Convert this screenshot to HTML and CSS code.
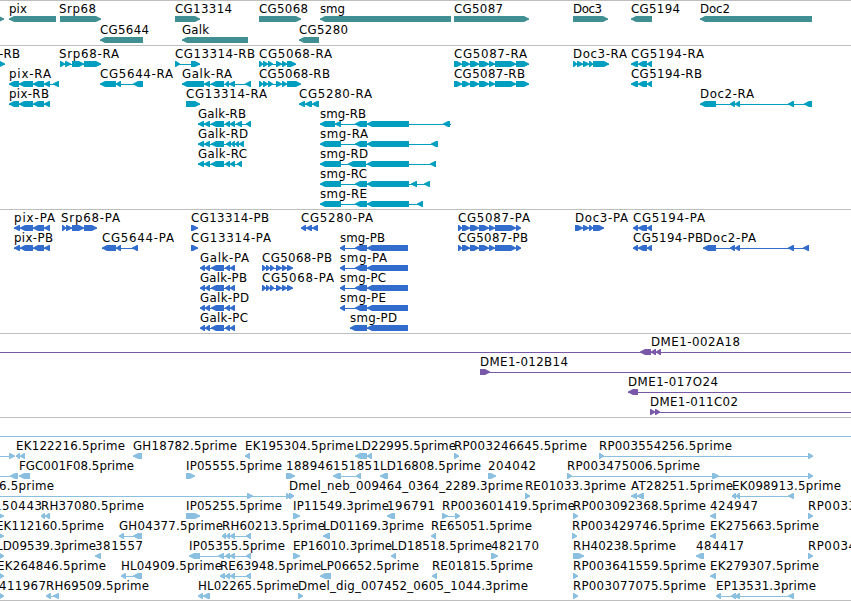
FILE: index.html
```html
<!DOCTYPE html>
<html lang="en">
<head>
<meta charset="utf-8">
<title>Genome browser</title>
<link rel="stylesheet" href="styles.css">
</head>
<body>
<main class="browser">
  <section class="track genes"><svg id="genes"></svg></section>
  <section class="track transcripts"><svg id="transcripts"></svg></section>
  <section class="track proteins"><svg id="proteins"></svg></section>
  <section class="track bacs"><svg id="bacs"></svg></section>
  <section class="track ests"><svg id="ests"></svg></section>
</main>
<script src="tracks.js"></script>
</body>
</html>
```
FILE: styles.css
```css
html, body { margin: 0; background: #fff; }
body { overflow: hidden; }
.browser {
  display: flex;
  flex-direction: column;
  width: 851px;
  height: 600px;
  border-bottom: 1px solid #bebebe;
}
.track { box-sizing: border-box; border-top: 1px solid #bebebe; }
.track svg { display: block; width: 851px; height: 100%; overflow: hidden; }
.genes { height: 45px; color: #408f93; }
.transcripts { height: 164px; color: #009fbf; }
.proteins { height: 124px; color: #326ccd; }
.bacs { height: 84px; color: #7a58a8; }
.ests { height: 183px; color: #8abfdf; }
.glyph { fill: currentColor; }
.intron { shape-rendering: crispEdges; }
.name {
  font-family: "DejaVu Sans", sans-serif;
  font-size: 11.8px;
  fill: #000;
}
```
FILE: tracks.js
```js
// Feature: row | label | label start | label end | strand | exons | optional intron span
const smg = "355-367,367-409";
const cg5087 = "462-470,470-479,479-489,489-495,495-516";
const tracks = {
  genes: { base: 12, step: 21, rows: `
0||0|0|>|-8-4
0|pix|9|27|<|9-56
0|Srp68|59|96|>|60-101
1|CG5644|100|149|<|100-143
0|CG13314|175|232|>|175-200
1|Galk|182|209|<|182-248
0|CG5068|259|308|>|259-301
1|CG5280|299|348|<|299-319
0|smg|320|345|<|320-451
0|CG5087|454|503|>|454-529
0|Doc3|573|602|>|573-608
0|CG5194|631|680|<|631-652
0|Doc2|700|730|<|700-812` },
  transcripts: { base: 12, step: 20, rows: `
0|-RB|-1|20|>|-4-5
0|Srp68-RA|59|119|>|60-65,65-71,72-84,84-101
0|CG13314-RB|175|255|>|175-180,191-200
0|CG5068-RA|259|332|>|259-263,263-268,268-273,276-282,282-287,287-296
0|CG5087-RA|454|527|>|454-462,${cg5087},516-529
0|Doc3-RA|573|627|>|573-577,577-583,583-589,589-593,593-609
0|CG5194-RA|631|704|<|631-638,638-647,647-652
1|pix-RA|9|51|<|9-19,19-33,33-44,44-50,53-59
1|CG5644-RA|100|173|<|100-116,116-121,133-143
1|Galk-RA|182|232|<|182-204,204-210,211-224,225-229,229-235,245-251
1|CG5068-RB|259|330|>|259-263,263-268,268-273,276-282,282-287,287-301
1|CG5087-RB|454|525|>|454-462,${cg5087},516-529
1|CG5194-RB|631|702|<|631-638,638-647,647-652
2|pix-RB|9|49|<|9-19,19-33,33-44,44-50
2|CG13314-RA|186|267|>|186-200
2|CG5280-RA|299|372|<|299-305,305-312,312-319
2|Doc2-RA|700|754|<|700-716,730-735,735-740,788-794,804-812
3|Galk-RB|198|246|<|198-204,204-210,211-224,225-230,230-235,236-242,246-251
3|smg-RB|320|366|<|320-335,335-341,${smg},443-450|320-451
4|Galk-RD|198|248|<|198-204,204-210,211-224,226-231,231-235,235-239,239-244
4|smg-RA|320|368|<|320-341,${smg},431-438
5|Galk-RC|198|247|<|198-204,204-210,211-224,225-230,230-235,237-242
5|smg-RD|320|368|<|320-341,348-366,367-409,430-436
6|smg-RC|320|367|<|320-341,${smg},411-417,424-430
7|smg-RE|320|367|<|320-341,${smg},417-423` },
  proteins: { base: 12, step: 20, rows: `
0|pix-PA|14|55|<|14-20,20-33,33-44,44-50
0|Srp68-PA|61|120|>|62-66,66-72,72-84,84-97
0|CG13314-PB|191|269|>|191-198
0|CG5280-PA|301|373|<|301-306,306-312,312-318
0|CG5087-PA|458|530|>|458-462,${cg5087},516-521
0|Doc3-PA|575|628|>|575-583,583-589,589-593,593-604
0|CG5194-PA|633|705|<|633-638,638-647,647-652
1|pix-PB|14|53|<|14-20,20-33,33-44,44-50
1|CG5644-PA|102|174|<|102-116,116-121,132-138
1|CG13314-PA|191|271|>|191-198
1|smg-PB|340|385|<|340-345,355-367,367-408
1|CG5087-PB|458|528|>|458-462,${cg5087},516-521
1|CG5194-PB|633|703|<|633-638,638-647,647-652
1|Doc2-PA|703|756|<|703-716,730-735,735-740,788-794,803-809
2|Galk-PA|200|249|<|200-205,205-210,211-224,225-230,230-235
2|CG5068-PB|262|332|>|262-266,266-270,270-274,276-282,282-287,287-293
2|smg-PA|340|387|<|340-345,355-367,367-408
3|Galk-PB|200|247|<|200-205,205-210,211-224,225-230,230-235
3|CG5068-PA|262|334|>|262-266,266-270,270-274,276-282,282-287,287-293
3|smg-PC|340|386|<|340-345,355-367,367-408
4|Galk-PD|200|249|<|200-205,205-210,211-224,225-230,230-235
4|smg-PE|340|386|<|340-345,355-367,367-408
5|Galk-PC|200|248|<|200-205,205-210,211-224,225-230,230-235
5|smg-PD|350|397|<|350-367,367-408` },
  bacs: { base: 12, step: 20, rows: `
0|DME1-002A18|651|740|<|640-651,651-656,656-661|0-851
1|DME1-012B14|480|568|>|480-490|480-851
2|DME1-017O24|628|718|<|628-638|628-851
3|DME1-011C02|650|738|>|650-655,655-660|650-851` },
  ests: { base: 32, step: 20, rows: `
-1||0|0|>||0-851
0||0|0|>|9-15|0-15
0|EK122216.5prime|16|125|<|16-20,20-25
0|GH18782.5prime|133|237|<|133-142
0|EK195304.5prime|245|354|<|245-250
0|LD22995.5prime|355|456|<|355-367,367-372
0|RP003246645.5prime|454|587|>|454-459
0|RP003554256.5prime|599|732|>|599-604,808-813
1||0|0|<|10-18|0-18
1|FGC001F08.5prime|19|134|<|19-30
1|IP05555.5prime|186|282|>|186-195
1|188946|286|333|>|286-295
1|151851|333|380|<|333-341,356-361
1|LD16808.5prime|380|481|<|380-388
1|204042|488|536|>|488-496
1|RP003475006.5prime|567|700|>|567-572,712-719,808-813
2|6.5prime|-1|54|>|247-253,286-290,289-294|0-294
2|Dmel_neb_009464_0364_2289.3prime|289|523|>|289-294
2|RE01033.3prime|525|626|>|525-530
2|AT28251.5prime|631|733|<|631-637,637-644
2|EK098913.5prime|732|841|<|732-736,736-740,788-794
3|150443|-6|42|>|-2-4
3|RH37080.5prime|41|144|<|41-45,45-50
3|IP05255.5prime|186|282|>|186-200
3|IP11549.3prime|293|389|>|293-300
3|196791|387|435|<|387-395
3|RP003601419.5prime|442|575|>|442-448,455-460
3|RP003092368.5prime|573|706|>|573-578
3|424947|710|758|<|710-716
3|RP0033|808|856|>|808-813
4|EK112160.5prime|-4|104|>|-2-4
4|GH04377.5prime|119|223|<|119-124,133-142
4|RH60213.5prime|222|325|<|222-226,226-230,230-235,246-251
4|LD01169.3prime|323|424|<|323-330
4|RE65051.5prime|431|532|<|431-436
4|RP003429746.5prime|572|705|>|572-577
4|EK275663.5prime|710|819|<|710-716
5|LD09539.3prime|-4|96|>|-1-4
5|381557|95|143|<|95-101
5|IP05355.5prime|189|285|<|189-200,218-224,225-230,230-235,246-251
5|EP16010.3prime|293|392|>|293-300
5|LD18518.5prime|391|492|<|391-396
5|482170|491|539|>|491-498
5|RH40238.5prime|573|676|>|573-584
5|484417|696|744|<|696-704
5|RP0034|808|856|>|808-813
6|EK264846.5prime|-3|106|>|-1-4
6|HL04909.5prime|121|222|<|121-126,133-142
6|RE63948.5prime|220|321|<|220-225,225-230,230-235,246-251
6|LP06652.5prime|320|419|<|320-331
6|RE01815.5prime|432|533|<|432-437
6|RP003641559.5prime|573|706|>|573-578
6|EK279307.5prime|710|819|<|710-716
7|411967|-1|46|>|-1-4
7|RH69509.5prime|46|149|<|46-51,53-59
7|HL02265.5prime|198|299|<|198-203,203-210
7|Dmel_dig_007452_0605_1044.3prime|298|528|>|298-303
7|RP003077075.5prime|573|706|>|573-578
7|EP13531.3prime|716|816|<|716-721,731-736,735-740,788-794` }
};

const NS = "http://www.w3.org/2000/svg";
function add(parent, tag, attrs, text) {
  const el = document.createElementNS(NS, tag);
  for (const k in attrs) el.setAttribute(k, attrs[k]);
  if (text) el.textContent = text;
  parent.appendChild(el);
}
function span(s) {
  const m = s.match(/^(-?\d+)-(\d+)$/);
  return [Number(m[1]), Number(m[2])];
}
// Six pixel high box with a pointed end on the strand's side.
function exon([a, b], y, strand) {
  const head = Math.min(b - a - 1, 5);
  const [tip, neck, tail] = strand === "<" ? [a, a + head, b] : [b, b - head, a];
  return `M${tip} ${y + 2.6}L${neck} ${y}H${tail}V${y + 6}H${neck}L${tip} ${y + 3.6}Z`;
}
for (const id in tracks) {
  const svg = document.getElementById(id);
  const { base, step, rows } = tracks[id];
  for (const line of rows.trim().split("\n")) {
    const [row, label, start, end, strand, exonText, intron] = line.split("|");
    const baseline = base + row * step;
    const y = baseline + 3;
    const exons = exonText ? exonText.split(",").map(span) : [];
    const [from, to] = intron ? span(intron) : [exons[0][0], exons[exons.length - 1][1]];
    add(svg, "path", { class: "glyph intron", d: `M${from} ${y + 3}H${to}V${y + 4}H${from}Z` });
    if (exons.length) {
      add(svg, "path", { class: "glyph", d: exons.map(e => exon(e, y, strand)).join("") });
    }
    if (label) {
      add(svg, "text", { class: "name", x: start, y: baseline, textLength: end - start }, label);
    }
  }
}
```
